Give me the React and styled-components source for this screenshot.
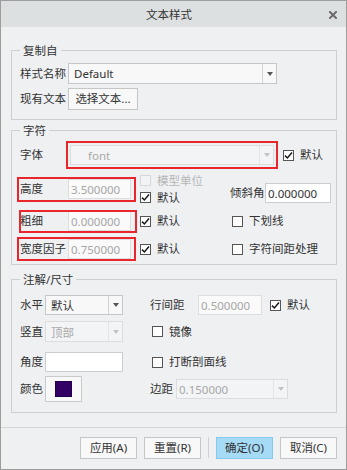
import React from 'react';
import styled, { createGlobalStyle } from 'styled-components';

const GlobalStyle = createGlobalStyle`
  html, body { margin: 0; padding: 0; background: #fff; }
  body {
    font-family: "Noto Sans", "Noto Sans CJK SC", sans-serif;
    font-size: 11.5px;
    color: #333;
  }
  * { box-sizing: border-box; }
`;

const Dialog = styled.div`
  width: 347px;
  height: 470px;
  border: 1px solid #9d9d9d;
  background: #eef0f2;
  display: flex;
  flex-direction: column;
`;

const TitleBar = styled.div`
  height: 26px;
  flex: none;
  background: #dde0e1;
  display: grid;
  grid-template-columns: 1fr auto 1fr;
  align-items: center;
  padding-right: 9px;
  line-height: 14px;
`;

const Title = styled.div`
  grid-column: 2;
  padding-top: 2px;
`;

const Close = styled.div`
  grid-column: 3;
  justify-self: end;
  display: flex;
  margin-top: 1px;
`;

const Body = styled.div`
  flex: 1;
  padding-top: 16px;
`;

const Group = styled.fieldset`
  margin: ${p => p.$mt || 0}px 9px 0 10px;
  padding: ${p => p.$pt}px 8px ${p => p.$pb}px 8px;
  border: 1px solid #cdd0d3;
  min-width: 0;
`;

const Legend = styled.legend`
  padding: 0 3px;
  line-height: 15px;
  color: #333;
`;

const Row = styled.div`
  display: flex;
  align-items: center;
  height: ${p => p.$h || 20}px;
  margin-top: ${p => p.$mt || 0}px;
`;

const Label = styled.span`
  flex: none;
  width: ${p => p.$w}px;
  line-height: 14px;
  white-space: nowrap;
  color: ${p => (p.$disabled ? '#b4b4b4' : '#333')};
`;

const Right = styled.div`
  display: flex;
  align-items: center;
  margin-left: ${p => p.$ml || 0}px;
`;

const Combo = styled.div`
  flex: none;
  display: flex;
  width: ${p => p.$w}px;
  height: ${p => p.$h || 20}px;
  border: 1px solid ${p => (p.$disabled ? '#dadcde' : '#c4c6c8')};
  background: ${p => (p.$disabled ? '#f3f4f5' : '#f8f8f8')};
  align-self: ${p => p.$self || 'auto'};
  margin-top: ${p => p.$mt || 0}px;
`;

const ComboText = styled.span`
  flex: 1;
  display: flex;
  align-items: center;
  padding-left: ${p => p.$pl ?? 5}px;
  color: ${p => (p.$disabled ? '#a8a8a8' : '#333')};
  white-space: nowrap;
`;

const ComboArrow = styled.span`
  flex: none;
  width: 14px;
  display: flex;
  align-items: center;
  justify-content: center;
  border-left: 1px solid ${p => (p.$disabled ? '#e3e4e5' : '#d0d2d4')};
  &::after {
    content: '';
    border-left: 3px solid transparent;
    border-right: 3px solid transparent;
    border-top: 4px solid ${p => (p.$disabled ? '#c2c2c2' : '#555')};
  }
`;

const Field = styled.div`
  flex: none;
  width: ${p => p.$w}px;
  height: 20px;
  border: 1px solid ${p => (p.$disabled ? '#dcdddf' : '#cbcdcf')};
  background: ${p => (p.$disabled ? '#fafafa' : '#fff')};
  padding-left: 2px;
  display: flex;
  align-items: center;
  color: ${p => (p.$disabled ? '#a6a6a6' : '#333')};
`;

const Button = styled.button`
  flex: none;
  width: ${p => p.$w}px;
  height: 22px;
  padding: 0;
  border: 1px solid ${p => (p.$primary ? '#86c8ee' : '#c4c6c8')};
  background: ${p => (p.$primary ? '#a6dbf8' : '#f8f8f8')};
  font: inherit;
  color: #333;
  line-height: 14px;
`;

const CheckItem = styled.div`
  display: flex;
  align-items: center;
  gap: 6px;
  height: 11px;
  margin-left: ${p => p.$ml || 0}px;
  color: ${p => (p.$disabled ? '#b6b6b6' : '#333')};
  line-height: 14px;
  white-space: nowrap;
`;

const Box = styled.span`
  flex: none;
  width: 11px;
  height: 11px;
  border: 1px solid ${p => (p.$disabled ? '#d6d7d9' : '#555')};
  background: ${p => (p.$disabled ? '#f2f3f4' : '#fff')};
  display: flex;
  align-items: center;
  justify-content: center;
`;

const Mark = styled.div`
  position: relative;
  display: flex;
  align-items: center;
  &::after {
    content: '';
    position: absolute;
    top: ${p => -p.$box[0]}px;
    right: ${p => -p.$box[1]}px;
    bottom: ${p => -p.$box[2]}px;
    left: ${p => -p.$box[3]}px;
    border: 2px solid #e8262c;
    pointer-events: none;
  }
`;

const FormGrid = styled.div`
  display: grid;
  grid-template-columns: 48px auto;
  justify-items: start;
  align-items: center;
  row-gap: 4px;
`;

const CharGrid = styled.div`
  display: grid;
  grid-template-columns: 111px 81px 1fr;
  grid-template-rows: 28px 20px 20px;
  column-gap: 9px;
  row-gap: 8px;
  align-items: center;
  margin-top: 10px;
`;

const Stack = styled.div`
  display: flex;
  flex-direction: column;
  gap: 6px;
`;

const Slant = styled.div`
  display: flex;
  align-items: center;
  align-self: end;
`;

const ColorButton = styled.div`
  flex: none;
  width: 37px;
  height: 26px;
  border: 1px solid #c8cacc;
  background: #f8f8f8;
  display: flex;
  align-items: center;
  justify-content: center;
`;

const Swatch = styled.span`
  width: 17px;
  height: 16px;
  background: ${p => p.$color};
  border: 1px solid #22004a;
`;

const Footer = styled.div`
  flex: none;
  height: 42px;
  border-top: 1px solid #d3d5d7;
  display: flex;
  justify-content: flex-end;
  align-items: flex-start;
  gap: 7px;
  padding: 9px 9px 0 0;
`;

const Divider = styled.span`
  width: 1px;
  height: 21px;
  background: #cfd1d3;
`;

function Check({ checked, disabled, ml, children }) {
  return (
    <CheckItem $ml={ml} $disabled={disabled}>
      <Box $disabled={disabled}>
        {checked && (
          <svg width="9" height="9" viewBox="0 0 9 9">
            <polyline points="1,4.6 3.4,7 8,1.6" fill="none" stroke="#1a1a1a" strokeWidth="1.5" />
          </svg>
        )}
      </Box>
      {children}
    </CheckItem>
  );
}

function Select({ w, h, disabled, pl, children, ...rest }) {
  return (
    <Combo $w={w} $h={h} $disabled={disabled} {...rest}>
      <ComboText $pl={pl} $disabled={disabled}>{children}</ComboText>
      <ComboArrow $disabled={disabled} />
    </Combo>
  );
}

export default function App() {
  return (
    <>
      <GlobalStyle />
      <Dialog>
        <TitleBar>
          <Title>文本样式</Title>
          <Close>
            <svg width="8" height="8" viewBox="0 0 8 8">
              <path d="M1 1 L7 7 M7 1 L1 7" stroke="#6b6b6b" strokeWidth="2" strokeLinecap="square" />
            </svg>
          </Close>
        </TitleBar>

        <Body>
          <Group $pt={5} $pb={9}>
            <Legend>复制自</Legend>
            <FormGrid>
              <Label>样式名称</Label>
              <Select w={209} h={21}>Default</Select>
              <Label>现有文本</Label>
              <Button $w={70}>选择文本...</Button>
            </FormGrid>
          </Group>

          <Group $mt={3} $pt={7} $pb={5}>
            <Legend>字符</Legend>
            <Row>
              <Label $w={50}>字体</Label>
              <Mark $box={[4, 4, 4, 4]}>
                <Select w={204} disabled pl={17}>font</Select>
              </Mark>
              <Check checked ml={9}>默认</Check>
            </Row>
            <CharGrid>
              <Mark $box={[2, 5, 3, 3]}>
                <Label $w={48}>高度</Label>
                <Field $w={63} $disabled>3.500000</Field>
              </Mark>
              <Stack>
                <Check disabled>模型单位</Check>
                <Check checked>默认</Check>
              </Stack>
              <Slant>
                <Label $w={35}>倾斜角</Label>
                <Field $w={66}>0.000000</Field>
              </Slant>

              <Mark $box={[1, 6, 2, 1]}>
                <Label $w={48}>粗细</Label>
                <Field $w={63} $disabled>0.000000</Field>
              </Mark>
              <Check checked>默认</Check>
              <Check ml={2}>下划线</Check>

              <Mark $box={[2, 5, 2, 3]}>
                <Label $w={48}>宽度因子</Label>
                <Field $w={63} $disabled>0.750000</Field>
              </Mark>
              <Check checked>默认</Check>
              <Check ml={2}>字符间距处理</Check>
            </CharGrid>
          </Group>

          <Group $mt={7} $pt={8} $pb={10}>
            <Legend>注解/尺寸</Legend>
            <Row>
              <Label $w={25}>水平</Label>
              <Select w={78}>默认</Select>
              <Right $ml={27}>
                <Label $w={48}>行间距</Label>
                <Field $w={64} $disabled>0.500000</Field>
                <Check checked ml={8}>默认</Check>
              </Right>
            </Row>
            <Row $mt={6} $h={21}>
              <Label $w={25}>竖直</Label>
              <Select w={78} h={21} disabled>顶部</Select>
              <Right $ml={27}>
                <Check ml={2}>镜像</Check>
              </Right>
            </Row>
            <Row $mt={10}>
              <Label $w={25}>角度</Label>
              <Field $w={78} />
              <Right $ml={27}>
                <Check ml={2}>打断剖面线</Check>
              </Right>
            </Row>
            <Row $mt={4} $h={26}>
              <Label $w={25}>颜色</Label>
              <ColorButton>
                <Swatch $color="#330066" />
              </ColorButton>
              <Right $ml={68}>
                <Label $w={26}>边距</Label>
                <Select w={112} disabled pl={2}>0.150000</Select>
              </Right>
            </Row>
          </Group>
        </Body>

        <Footer>
          <Button $w={57}>应用(A)</Button>
          <Button $w={57}>重置(R)</Button>
          <Divider />
          <Button $w={57} $primary>确定(O)</Button>
          <Button $w={57}>取消(C)</Button>
        </Footer>
      </Dialog>
    </>
  );
}
